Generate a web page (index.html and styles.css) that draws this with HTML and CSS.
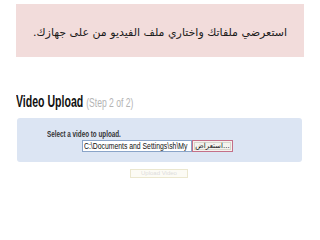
FILE: index.html
```html
<!DOCTYPE html>
<html lang="ar">
<head>
<meta charset="utf-8">
<link rel="stylesheet" href="styles.css">
</head>
<body>
<div class="notice" dir="rtl">استعرضي ملفاتك واختاري ملف الفيديو من على جهازك.</div>
<div class="page" dir="ltr">
  <h1 class="heading"><span class="squish">Video Upload <span class="step">(Step 2 of 2)</span></span></h1>
  <div class="panel">
    <div class="label"><span class="squish-label">Select a video to upload.</span></div>
    <div class="file-row">
      <div class="file-input"><span class="squish-input">C:\Documents and Settings\sh\My</span></div>
      <div class="browse"><span class="browse-inner">استعراض...</span></div>
    </div>
  </div>
  <div class="submit-row">
    <div class="submit"><span>Upload Video</span></div>
  </div>
</div>
</body>
</html>
```
FILE: styles.css
```css
html, body {
  margin: 0;
  padding: 0;
  background: #ffffff;
}
body {
  width: 320px;
  height: 240px;
  overflow: hidden;
  font-family: "Liberation Sans", Arial, sans-serif;
}
.notice {
  margin: 4px 16px 0 16px;
  height: 53px;
  background: #f2dcdb;
  display: flex;
  align-items: center;
  justify-content: center;
  padding-top: 4px;
  box-sizing: border-box;
  font-family: "DejaVu Sans", "Liberation Sans", sans-serif;
  font-size: 11px;
  color: #1a1a1a;
}
.page {
  display: flex;
  flex-direction: column;
}
.heading {
  margin: 37px 0 0 16px;
  height: 16px;
  line-height: 16px;
  font-size: 16px;
  font-weight: bold;
  color: #111;
  white-space: nowrap;
}
.squish {
  display: inline-block;
  transform: scaleX(0.66);
  transform-origin: left center;
}
.step {
  font-size: 13px;
  font-weight: normal;
  color: #b4b4b4;
}
.panel {
  margin: 8px 18px 0 17px;
  height: 44px;
  background: #dce5f3;
  border-radius: 3px;
  padding: 11px 0 0 30px;
  box-sizing: border-box;
}
.label {
  font-size: 9px;
  line-height: 10px;
  font-weight: bold;
  color: #333;
  white-space: nowrap;
}
.squish-label {
  display: inline-block;
  transform: scaleX(0.7);
  transform-origin: left center;
}
.file-row {
  display: flex;
  align-items: flex-start;
  margin: 1px 0 0 35px;
}
.file-input {
  width: 110px;
  height: 12px;
  box-sizing: border-box;
  background: #fff;
  border: 1px solid #8aa4c8;
  white-space: nowrap;
  font-size: 9px;
  line-height: 10px;
  color: #111;
  padding-left: 1px;
}
.squish-input {
  display: inline-block;
  width: 140px;
  transform: scaleX(0.76);
  transform-origin: left center;
}
.browse {
  width: 41px;
  height: 12px;
  box-sizing: border-box;
  border: 1px solid #c47089;
  background: #f4f3ee;
  display: flex;
  align-items: center;
  justify-content: center;
  padding: 1px;
}
.browse-inner {
  display: flex;
  align-items: center;
  justify-content: center;
  width: 100%;
  height: 100%;
  border: 1px solid #d8d6cc;
  box-sizing: border-box;
  font-family: "DejaVu Sans", sans-serif;
  font-size: 7px;
  line-height: 7px;
  color: #111;
  direction: ltr;
  white-space: nowrap;
}
.submit-row {
  display: flex;
  margin-top: 7px;
  padding-left: 130px;
}
.submit {
  width: 58px;
  height: 9px;
  box-sizing: border-box;
  border: 1px solid #ebe7cf;
  background: #fcfbf5;
  font-size: 6px;
  line-height: 7px;
  color: #dcdcdc;
  text-align: center;
  overflow: hidden;
}
```
